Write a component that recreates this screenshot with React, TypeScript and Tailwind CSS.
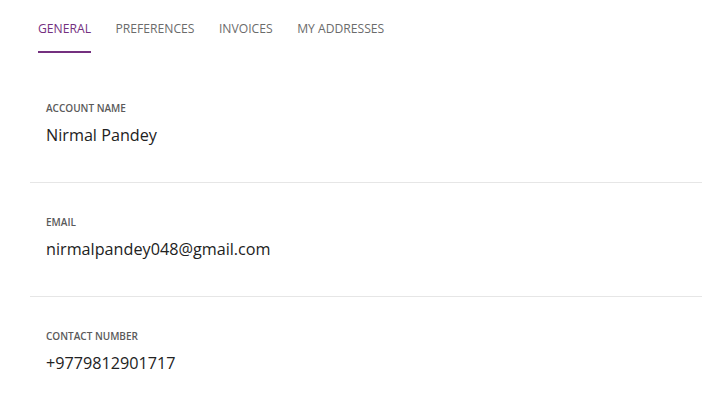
const tabs = ["GENERAL", "PREFERENCES", "INVOICES", "MY ADDRESSES"];

const fields = [
  { label: "ACCOUNT NAME", value: "Nirmal Pandey" },
  { label: "EMAIL", value: "nirmalpandey048@gmail.com" },
  { label: "CONTACT NUMBER", value: "+9779812901717" },
];

export default function App() {
  return (
    <div className="w-[702px] h-[406px] overflow-hidden bg-white" style={{ fontFamily: '"Open Sans", sans-serif' }}>
      {/* Tabs */}
      <div className="flex gap-[24.5px] pl-[38px] pt-[20px]">
        {tabs.map((t, i) => (
          <div key={t} className="flex flex-col">
            <span className={`text-[12.15px] leading-[18px] ${i === 0 ? "text-[#74307f]" : "text-[#6b6b6b]"}`}>{t}</span>
            <div className={`mt-[13px] h-[2px] ${i === 0 ? "bg-[#74307f]" : "bg-transparent"}`} />
          </div>
        ))}
      </div>

      {/* Fields */}
      <div className="ml-[30px] mt-[16px]">
        {fields.map((f, i) => (
          <div key={f.label} className={`pl-4 pt-[32px] pb-[35px] ${i < fields.length - 1 ? "border-b border-[#e6e6e6]" : ""}`}>
            <div className="text-[10px] leading-[14px] font-semibold text-[#5a5a5a]">{f.label}</div>
            <div className="mt-2 text-[16.2px] leading-[24px] text-[#222]">{f.value}</div>
          </div>
        ))}
      </div>
    </div>
  );
}
